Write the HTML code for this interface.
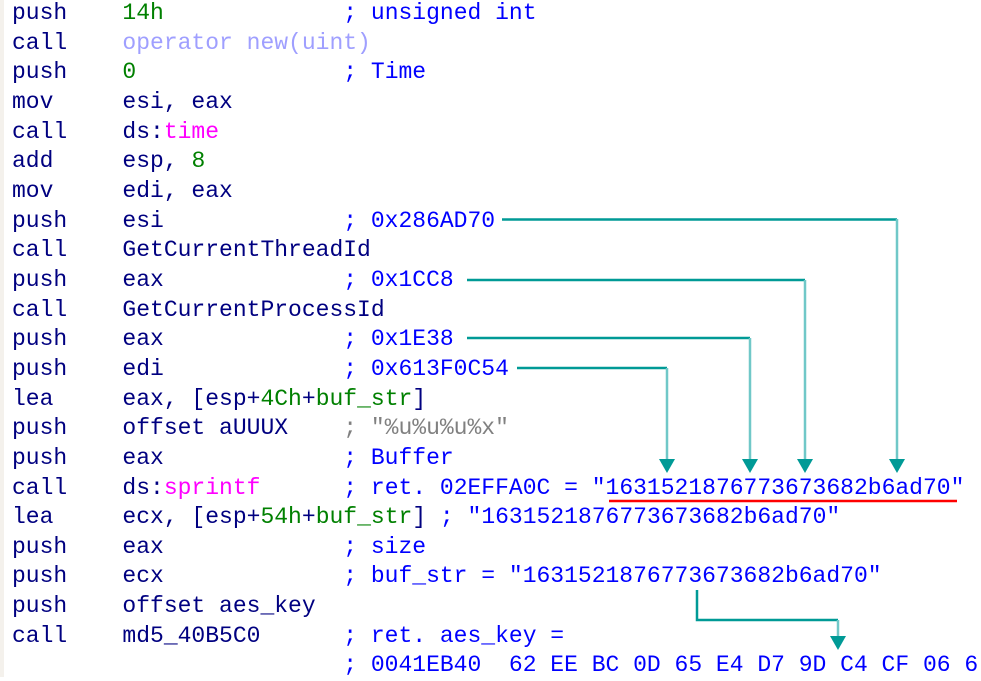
<!DOCTYPE html><html><head><meta charset="utf-8"><style>
body{margin:0;width:981px;height:677px;background:#fff;overflow:hidden;position:relative}
pre{position:absolute;left:12px;top:-1px;margin:0;font:23px/29.65px "Liberation Mono",monospace;color:#000080}
.g{color:#008000}.c{color:#0000ff}.p{color:#9f9fff}.m{color:#ff00ff}.s{color:#808080}
svg{position:absolute;left:0;top:0}
</style></head><body>
<div style="position:absolute;left:0;top:0;width:4px;height:677px;background:#f4f1ec"></div>
<pre>push    <span class="g">14h</span>             <span class="c">; unsigned int</span>
call    <span class="p">operator new(uint)</span>
push    <span class="g">0</span>               <span class="c">; Time</span>
mov     esi, eax
call    ds:<span class="m">time</span>
add     esp, <span class="g">8</span>
mov     edi, eax
push    esi             <span class="c">; 0x286AD70</span>
call    GetCurrentThreadId
push    eax             <span class="c">; 0x1CC8</span>
call    GetCurrentProcessId
push    eax             <span class="c">; 0x1E38</span>
push    edi             <span class="c">; 0x613F0C54</span>
lea     eax, [esp+<span class="g">4Ch</span>+<span class="g">buf_str</span>]
push    offset aUUUX    <span class="s">; "%u%u%u%x"</span>
push    eax             <span class="c">; Buffer</span>
call    ds:<span class="m">sprintf</span>      <span class="c">; ret. 02EFFA0C = "1631521876773673682b6ad70"</span>
lea     ecx, [esp+<span class="g">54h</span>+<span class="g">buf_str</span>] <span class="c">; "1631521876773673682b6ad70"</span>
push    eax             <span class="c">; size</span>
push    ecx             <span class="c">; buf_str = "1631521876773673682b6ad70"</span>
push    offset aes_key
call    md5_40B5C0      <span class="c">; ret. aes_key =</span>
                        <span class="c">; 0041EB40  62 EE BC 0D 65 E4 D7 9D C4 CF 06 6</span></pre>
<svg width="981" height="677">
<g fill="none" stroke-width="2.5">
<path d="M502 219.5H897" stroke="#009a96"/><path d="M897 219V460" stroke="#70c8c8"/>
<path d="M467 280H805" stroke="#009a96"/><path d="M805 280V460" stroke="#70c8c8"/>
<path d="M467 338H750" stroke="#009a96"/><path d="M750 338V460" stroke="#70c8c8"/>
<path d="M517 368H667" stroke="#009a96"/><path d="M667 368V460" stroke="#70c8c8"/>
<path d="M697 590V620H838" stroke="#009a96"/><path d="M838 620V638" stroke="#70c8c8"/>
</g>
<g fill="#009a96">
<path d="M659 459h16l-8 14z"/><path d="M742 459h16l-8 14z"/><path d="M797 459h16l-8 14z"/><path d="M889 459h16l-8 14z"/><path d="M830 636h16l-8 14z"/>
</g>
<path d="M609 501H957" stroke="#ff0000" stroke-width="2.5"/>
</svg>
</body></html>
